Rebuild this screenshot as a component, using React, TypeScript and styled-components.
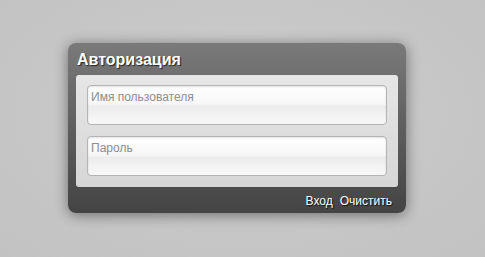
import React from "react";
import styled, { createGlobalStyle } from "styled-components";

const GlobalStyle = createGlobalStyle`
  html, body {
    margin: 0;
    padding: 0;
    height: 100%;
    background: radial-gradient(ellipse at 50% 45%, #cfcfcf 0%, #c6c6c6 60%, #c2c2c2 100%);
    font-family: "Liberation Sans", Arial, sans-serif;
  }
  #root {
    height: 100%;
  }
`;

const Page = styled.div`
  display: flex;
  align-items: flex-start;
  padding: 43px 0 0 68px;
  height: 100%;
  box-sizing: border-box;
`;

const Panel = styled.form`
  width: 338px;
  height: 170px;
  box-sizing: border-box;
  display: flex;
  flex-direction: column;
  padding: 0 8px;
  border-radius: 8px;
  background: linear-gradient(to bottom, #7a7a7a 0%, #5e5e5e 50%, #444 100%);
  box-shadow: 0 2px 14px rgba(0, 0, 0, 0.45);
`;

const Title = styled.h1`
  margin: 0;
  height: 32px;
  display: flex;
  align-items: center;
  padding: 2px 0 0 1px;
  box-sizing: border-box;
  font-size: 16px;
  font-weight: bold;
  color: #fff;
  text-shadow: 1px 1px 1px #222;
`;

const Fields = styled.div`
  height: 112px;
  box-sizing: border-box;
  display: flex;
  flex-direction: column;
  gap: 11px;
  padding: 10px 11px 11px;
  border-radius: 3px;
  background: linear-gradient(to bottom, #e6e6e6, #d6d6d6);
`;

const Field = styled.input`
  height: 40px;
  box-sizing: border-box;
  border: 1px solid #b4b4b4;
  border-radius: 4px;
  padding: 0 3px 16px;
  font-family: "Liberation Sans", Arial, sans-serif;
  font-size: 12px;
  color: #555;
  outline: none;
  background: linear-gradient(to bottom, #ffffff 0%, #f6f6f6 50%, #ececec 52%, #f8f8f8 100%);
  box-shadow: inset 0 1px 2px rgba(0, 0, 0, 0.12);

  &::placeholder {
    color: #8e8e8e;
  }
`;

const Footer = styled.div`
  flex: 1;
  display: flex;
  justify-content: flex-end;
  align-items: center;
  gap: 7px;
  padding: 2px 6px 0 0;
`;

const Action = styled.button`
  border: none;
  background: none;
  padding: 0;
  font-family: "Liberation Sans", Arial, sans-serif;
  font-size: 12px;
  color: #fff;
  text-shadow: 1px 1px 1px #111;
  cursor: pointer;
`;

export default function App() {
  return (
    <>
      <GlobalStyle />
      <Page>
        <Panel onSubmit={(e) => e.preventDefault()}>
          <Title>Авторизация</Title>
          <Fields>
            <Field type="text" placeholder="Имя пользователя" />
            <Field type="password" placeholder="Пароль" />
          </Fields>
          <Footer>
            <Action type="submit">Вход</Action>
            <Action type="reset">Очистить</Action>
          </Footer>
        </Panel>
      </Page>
    </>
  );
}
